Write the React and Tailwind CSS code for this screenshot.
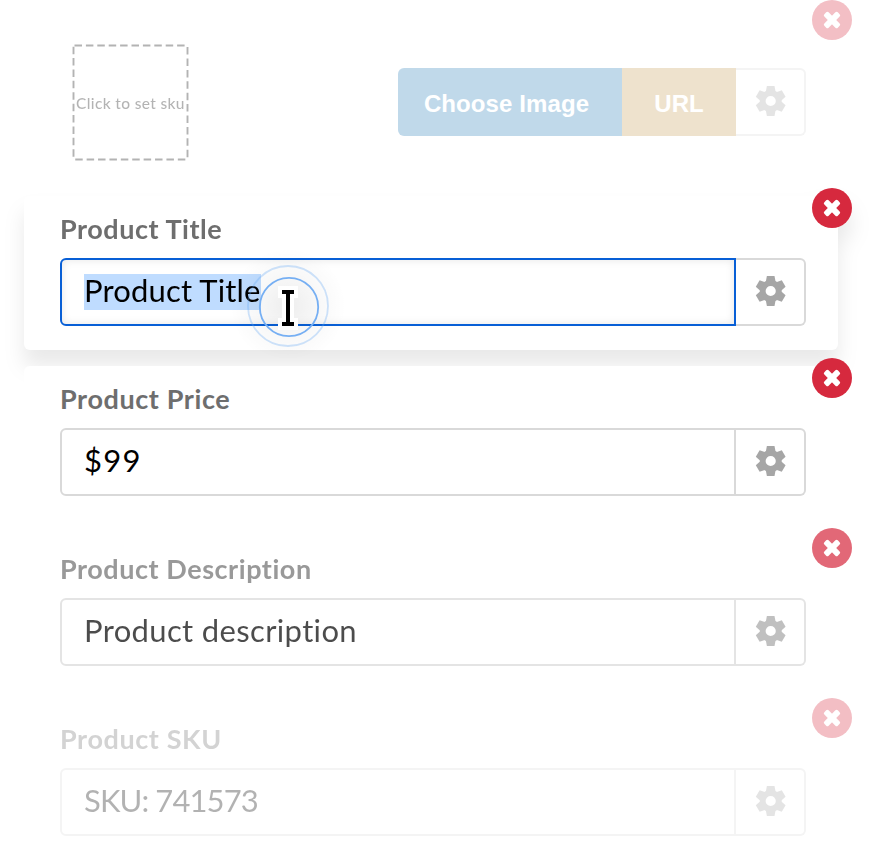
const FIELDS = [
  { key: 'title', label: 'Product Title', value: 'Product Title', labelTrack: 'tracking-[0.55px]', track: 'tracking-[0.15px]', fade: 'drop-shadow-[0_16px_10px_rgba(0,0,0,0.085)]', active: true },
  { key: 'price', label: 'Product Price', value: '$99', labelTrack: 'tracking-[0.6px]', track: 'tracking-[1.3px]', fade: 'opacity-100' },
  { key: 'description', label: 'Product Description', value: 'Product description', labelTrack: 'tracking-[0.55px]', track: 'tracking-[0.35px]', fade: 'opacity-70' },
  { key: 'sku', label: 'Product SKU', value: 'SKU: 741573', labelTrack: 'tracking-[0.6px]', track: 'tracking-[-0.9px]', fade: 'opacity-30' },
];

const TEETH = [0, 60, 120, 180, 240, 300];

function RemoveButton() {
  return (
    <button
      type="button"
      aria-label="Remove field"
      className="absolute right-8 top-0 z-20 flex size-10 items-center justify-center rounded-full bg-[#d6293e]"
    >
      <svg viewBox="-9 -9 18 18" className="size-[18px]" fill="#fff" aria-hidden="true">
        <rect x="-9.5" y="-3" width="19" height="6" rx="1.7" transform="rotate(45)" />
        <rect x="-9.5" y="-3" width="19" height="6" rx="1.7" transform="rotate(-45)" />
      </svg>
    </button>
  );
}

function GearIcon() {
  return (
    <svg viewBox="-15.7 -16 32 32" className="size-8 text-[#a6a6a6]" fill="currentColor" aria-hidden="true">
      <circle r="8" fill="none" stroke="currentColor" strokeWidth="5.8" />
      {TEETH.map((angle) => (
        <path key={angle} d="M-4.9-9.2-3.8-15H3.8L4.9-9.2z" transform={`rotate(${angle})`} />
      ))}
    </svg>
  );
}

function GearButton() {
  return (
    <button
      type="button"
      aria-label="Settings"
      className="flex h-full w-[70px] shrink-0 items-center justify-center rounded-r-md border-2 border-l-0 border-[#d9d9d9] bg-white pb-0.5 pl-0.5"
    >
      <GearIcon />
    </button>
  );
}

/* Text cursor with the click ripple around it */
function Cursor() {
  return (
    <svg viewBox="0 0 160 160" className="absolute left-[208px] top-[38px] z-30 size-40" aria-hidden="true">
      <defs>
        <radialGradient id="ripple">
          <stop offset="0" stopColor="#000" stopOpacity="0.07" />
          <stop offset="0.5" stopColor="#000" stopOpacity="0.03" />
          <stop offset="1" stopColor="#000" stopOpacity="0" />
        </radialGradient>
      </defs>
      <circle cx="80" cy="80" r="58" fill="url(#ripple)" />
      <circle cx="80" cy="80" r="40" fill="none" stroke="#5fa5f5" strokeOpacity="0.3" strokeWidth="1.8" />
      <circle cx="81" cy="81" r="29.2" fill="none" stroke="#76aff3" strokeWidth="1.8" />
      <path d="M70 60h20v12h-4v20h4v12H70V92h4V72h-4z" fill="#fff" />
      <path d="M74 64h12v4h-4v28h4v4H74v-4h4V68h-4z" fill="#000" />
    </svg>
  );
}

function Field({ field }) {
  return (
    <section className={`relative h-[170px] px-6 py-2 ${field.fade}`}>
      <RemoveButton />
      <div className="mr-[22px] h-[154px] rounded-md bg-white pl-9 pr-8 pt-[18px]">
        <label className={`flex h-[30px] items-center whitespace-nowrap text-[27px] font-bold text-[#6e6e6e] ${field.labelTrack}`}>
          {field.label}
        </label>
        <div className="mt-3.5 flex h-[68px]">
          <div
            className={`flex flex-1 items-center rounded-l-md border-2 pl-[22px] ${
              field.active ? 'border-[#085fd6] shadow-[inset_0_0_8px_rgba(0,0,0,0.1)]' : 'border-[#d9d9d9]'
            }`}
          >
            <span
              className={`flex h-9 items-center whitespace-nowrap pb-[3px] text-[31px] text-black ${field.track} ${
                field.active ? 'bg-[#bfdcff]' : ''
              }`}
            >
              {field.value}
            </span>
          </div>
          <GearButton />
        </div>
      </div>
      {field.active && <Cursor />}
    </section>
  );
}

function ImageRow() {
  return (
    <section className="relative flex h-[188px] items-start pl-[72px] pr-[78px] opacity-30">
      <RemoveButton />
      <div className="relative mt-11 flex size-[117px] items-center justify-center">
        <svg viewBox="0 0 117 117" className="absolute inset-0 size-full" aria-hidden="true">
          <rect x="1.5" y="1.5" width="114" height="114" rx="1" fill="none" stroke="#000" strokeWidth="1.9" strokeDasharray="7.5 3.9" />
        </svg>
        <span className="whitespace-nowrap pt-0.5 text-[15.5px] font-medium tracking-[0.35px] text-black">Click to set sku</span>
      </div>
      <div className="ml-auto mt-[68px] flex h-[68px] font-['Liberation_Sans',sans-serif] text-2xl font-bold text-white">
        <button type="button" className="w-56 rounded-l-md bg-[#2d7fb9] pr-[7px] pt-1 tracking-[0.1px]">Choose Image</button>
        <button type="button" className="w-[114px] bg-[#c79f58] pt-1">URL</button>
        <GearButton />
      </div>
    </section>
  );
}

export default function App() {
  return (
    <main className="h-[860px] w-[884px] overflow-hidden bg-white font-[Lato,sans-serif] [font-variant-ligatures:none]">
      <ImageRow />
      {FIELDS.map((field) => (
        <Field key={field.key} field={field} />
      ))}
    </main>
  );
}
